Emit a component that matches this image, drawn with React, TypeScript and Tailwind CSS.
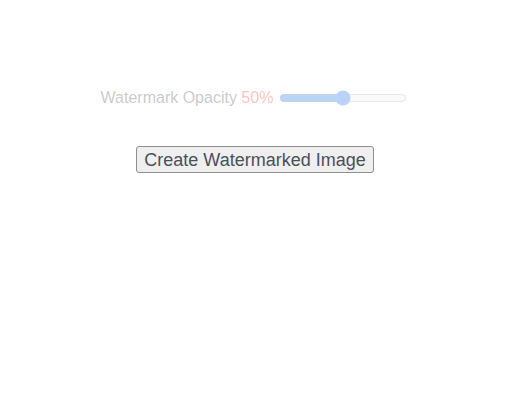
import { useState } from 'react'

export default function App() {
  const [opacity, setOpacity] = useState(50)

  return (
    <div className="w-[505px] h-[400px] bg-white flex flex-col items-center pt-[86px] font-['Liberation_Sans',Arial,sans-serif]">
      <div className="flex items-center ml-[3px] opacity-30 text-base text-[#555]">
        <label htmlFor="op">Watermark Opacity <span className="text-[#ef3b32]">{opacity}%</span></label>
        <input id="op" type="range" min={0} max={100} value={opacity}
          onChange={e => setOpacity(Number(e.target.value))}
          className="ml-[6px] w-[128px] accent-[#1a73e8]" />
      </div>
      <button className="mt-[36px] ml-[5px] px-[7px] h-[27px] text-[18px] leading-none text-[#4b4f5a] bg-[#efefef] border border-[#8f8f8f] rounded-[3px]">
        Create Watermarked Image
      </button>
    </div>
  )
}
